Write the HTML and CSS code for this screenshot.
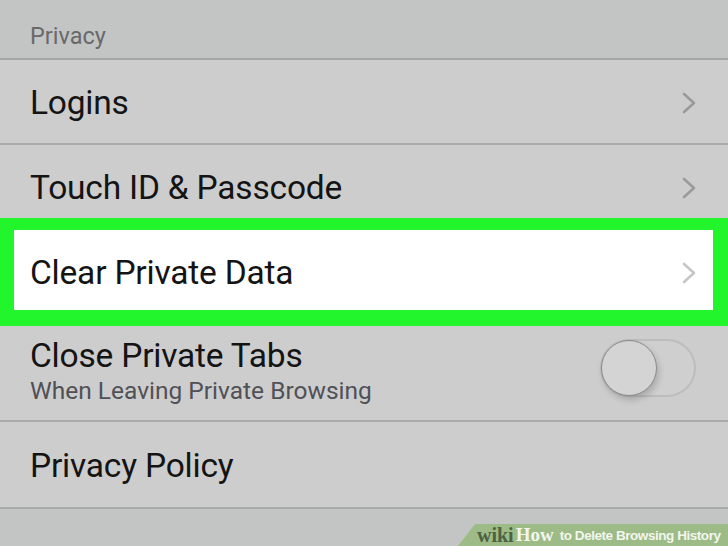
FILE: index.html
```html
<!DOCTYPE html>
<html>
<head>
<meta charset="utf-8">
<link rel="stylesheet" href="styles.css">
</head>
<body>
<div class="screen">
  <div class="section-header">Privacy</div>
  <div class="row">
    <span class="label">Logins</span>
    <svg class="chev" viewBox="0 0 14 22" width="14" height="22"><path d="M2 2 L12 11 L2 20" fill="none" stroke="currentColor" stroke-width="2.6" stroke-linecap="round" stroke-linejoin="round"/></svg>
  </div>
  <div class="row">
    <span class="label">Touch ID &amp; Passcode</span>
    <svg class="chev" viewBox="0 0 14 22" width="14" height="22"><path d="M2 2 L12 11 L2 20" fill="none" stroke="currentColor" stroke-width="2.6" stroke-linecap="round" stroke-linejoin="round"/></svg>
  </div>
  <div class="row highlight">
    <span class="label">Clear Private Data</span>
    <svg class="chev" viewBox="0 0 14 22" width="14" height="22"><path d="M2 2 L12 11 L2 20" fill="none" stroke="currentColor" stroke-width="2.6" stroke-linecap="round" stroke-linejoin="round"/></svg>
  </div>
  <div class="row tall">
    <div class="stack">
      <span class="label">Close Private Tabs</span>
      <span class="sub">When Leaving Private Browsing</span>
    </div>
    <div class="toggle"><div class="knob"></div></div>
  </div>
  <div class="row last">
    <span class="label">Privacy Policy</span>
  </div>
  <div class="footer">
    <div class="banner"><span class="wiki">wiki</span><span class="how">How</span><span class="title">to Delete Browsing History</span></div>
  </div>
</div>
</body>
</html>
```
FILE: styles.css
```css
html, body {
  margin: 0;
  padding: 0;
}
body {
  width: 728px;
  height: 546px;
  overflow: hidden;
  background: #c4c6c5;
  font-family: Roboto, "Liberation Sans", sans-serif;
}
.screen {
  display: flex;
  flex-direction: column;
  height: 546px;
}
.section-header {
  height: 60px;
  box-sizing: border-box;
  padding: 22px 0 0 30px;
  font-size: 23.5px;
  line-height: 28px;
  color: #68696b;
  background: #c3c5c4;
  border-bottom: 2px solid #a6a8a7;
}
.row {
  height: 85px;
  box-sizing: border-box;
  display: flex;
  align-items: center;
  justify-content: space-between;
  padding: 2px 32px 0 30px;
  background: #cdcdcd;
  border-bottom: 2px solid #a9aaaa;
  position: relative;
}
.last {
  height: 87px;
}
.label {
  font-size: 33.5px;
  line-height: 38px;
  color: #141414;
  letter-spacing: -0.2px;
}
.chev {
  color: #9a9a9a;
}
.highlight {
  background: #ffffff;
  z-index: 1;
}
.highlight .chev {
  color: #c6c6c6;
}
.highlight::after {
  content: "";
  position: absolute;
  top: -12px;
  bottom: -13px;
  left: 0;
  right: 0;
  border-style: solid;
  border-color: #22f52c;
  border-width: 12px 15px 16px 14px;
  pointer-events: none;
}
.tall {
  height: 107px;
  padding-top: 0;
  padding-right: 32px;
  align-items: flex-start;
}
.stack {
  display: flex;
  flex-direction: column;
  padding-top: 22px;
}
.sub {
  font-size: 24.5px;
  line-height: 31px;
  color: #505156;
  margin-top: 0;
}
.toggle {
  margin-top: 24px;
  width: 96px;
  height: 58px;
  box-sizing: border-box;
  border: 2px solid #bdbdbd;
  border-radius: 29px;
  background: #cfcfcf;
  position: relative;
}
.knob {
  position: absolute;
  left: -1px;
  top: -1px;
  width: 56px;
  height: 56px;
  border-radius: 50%;
  background: #d4d4d4;
  border: 1px solid #8a8a8a;
  box-sizing: border-box;
  box-shadow: 2px 4px 6px rgba(0,0,0,0.18);
}
.footer {
  flex: 1;
  display: flex;
  justify-content: flex-end;
  align-items: flex-end;
  background: #c3c5c4;
}
.banner {
  height: 22px;
  width: 270px;
  background: #9cbb86;
  clip-path: polygon(17px 0, 100% 0, 100% 100%, 0 100%);
  display: flex;
  align-items: center;
  padding-left: 19px;
  box-sizing: border-box;
  white-space: nowrap;
}
.wiki {
  font-family: "Liberation Serif", serif;
  font-weight: bold;
  font-size: 20px;
  color: #4d6242;
}
.how {
  font-family: "Liberation Serif", serif;
  font-weight: bold;
  font-size: 19px;
  color: #f2f6ee;
  margin-right: 6px;
  margin-left: 2px;
}
.title {
  font-family: "Liberation Sans", sans-serif;
  font-weight: bold;
  font-size: 13.5px;
  color: #f2f6ee;
  letter-spacing: -0.45px;
}
```
